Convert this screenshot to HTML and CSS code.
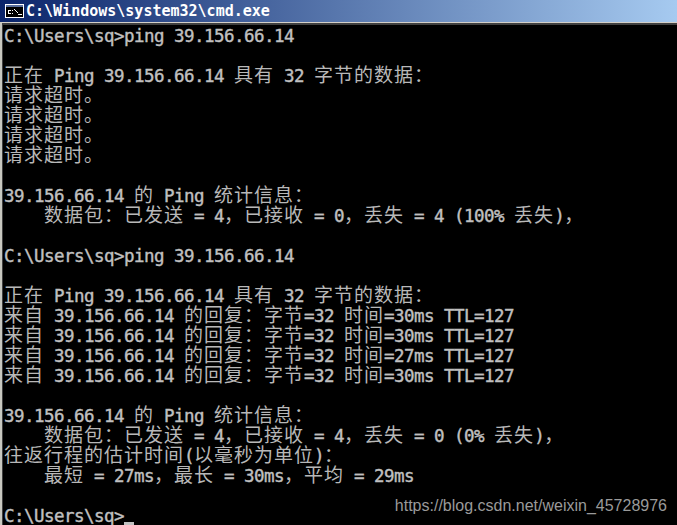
FILE: index.html
```html
<!DOCTYPE html>
<html lang="zh">
<head>
<meta charset="utf-8">
<title>cmd.exe</title>
<link rel="stylesheet" href="styles.css">
</head>
<body>
<div class="window">
  <div class="titlebar">
    <svg class="appicon" width="19" height="14" viewBox="0 0 19 14" aria-hidden="true"><rect x="0" y="0" width="19" height="14" fill="#fff"/><rect x="1" y="1" width="17" height="2" fill="#5a6f9e"/><rect x="1" y="3" width="17" height="10" fill="#000"/><path d="M3 6h3v1H3zM3 7h1v2H3zM3 9h3v1H3zM7 6h1v1H7zM7 9h1v1H7zM9 5h1v1H9zM10 6h1v1h-1zM11 7h1v1h-1zM12 8h1v1h-1zM13 10h4v1h-4z" fill="#fff"/></svg>
    <span class="title">C:\Windows\system32\cmd.exe</span>
  </div>
  <div class="console">
    <div class="line">C:\Users\sq&gt;ping 39.156.66.14</div>
    <div class="line"></div>
    <div class="line"><span class="z">正在</span> Ping 39.156.66.14 <span class="z">具有</span> 32 <span class="z">字节的数据：</span></div>
    <div class="line"><span class="z">请求超时。</span></div>
    <div class="line"><span class="z">请求超时。</span></div>
    <div class="line"><span class="z">请求超时。</span></div>
    <div class="line"><span class="z">请求超时。</span></div>
    <div class="line"></div>
    <div class="line">39.156.66.14 <span class="z">的</span> Ping <span class="z">统计信息：</span></div>
    <div class="line">    <span class="z">数据包：已发送</span> = 4<span class="z">，已接收</span> = 0<span class="z">，丢失</span> = 4 (100% <span class="z">丢失</span>)<span class="z">，</span></div>
    <div class="line"></div>
    <div class="line">C:\Users\sq&gt;ping 39.156.66.14</div>
    <div class="line"></div>
    <div class="line"><span class="z">正在</span> Ping 39.156.66.14 <span class="z">具有</span> 32 <span class="z">字节的数据：</span></div>
    <div class="line"><span class="z">来自</span> 39.156.66.14 <span class="z">的回复：字节</span>=32 <span class="z">时间</span>=30ms TTL=127</div>
    <div class="line"><span class="z">来自</span> 39.156.66.14 <span class="z">的回复：字节</span>=32 <span class="z">时间</span>=30ms TTL=127</div>
    <div class="line"><span class="z">来自</span> 39.156.66.14 <span class="z">的回复：字节</span>=32 <span class="z">时间</span>=27ms TTL=127</div>
    <div class="line"><span class="z">来自</span> 39.156.66.14 <span class="z">的回复：字节</span>=32 <span class="z">时间</span>=30ms TTL=127</div>
    <div class="line"></div>
    <div class="line">39.156.66.14 <span class="z">的</span> Ping <span class="z">统计信息：</span></div>
    <div class="line">    <span class="z">数据包：已发送</span> = 4<span class="z">，已接收</span> = 4<span class="z">，丢失</span> = 0 (0% <span class="z">丢失</span>)<span class="z">，</span></div>
    <div class="line"><span class="z">往返行程的估计时间</span>(<span class="z">以毫秒为单位</span>)<span class="z">：</span></div>
    <div class="line">    <span class="z">最短</span> = 27ms<span class="z">，最长</span> = 30ms<span class="z">，平均</span> = 29ms</div>
    <div class="line"></div>
    <div class="line">C:\Users\sq&gt;<span class="cursor"></span></div>
  </div>
  <div class="watermark">https://blog.csdn.net/weixin_45728976</div>
</div>
</body>
</html>
```
FILE: styles.css
```css
html, body {
  margin: 0;
  padding: 0;
  background: #000;
}
.window {
  position: relative;
  width: 677px;
  height: 525px;
  overflow: hidden;
  background: #000;
}
.titlebar {
  display: flex;
  align-items: center;
  gap: 2px;
  height: 22px;
  padding-left: 5px;
  box-sizing: border-box;
  background: linear-gradient(90deg, #0a246a 0%, #a6caf0 100%);
}
.appicon {
  flex: none;
}
.title {
  font-family: "DejaVu Sans Mono", monospace;
  font-weight: 700;
  font-size: 15px;
  color: #fff;
  white-space: pre;
}
.console {
  height: 503px;
  box-sizing: border-box;
  padding: 3px 0 0 2px;
  border-top: 1px solid #d4d0c8;
  border-left: 2px solid #c8c8c0;
  box-shadow: inset 1px 2px 0 #404040;
  font-family: "DejaVu Sans Mono", monospace;
  font-size: 17.5px;
  letter-spacing: -0.535px;
  font-weight: 400;
  -webkit-text-stroke: 0.4px #c0c0c0;
  color: #c0c0c0;
}
.line {
  height: 20px;
  line-height: 20px;
  white-space: pre;
}
.z {
  font-family: "Noto Sans CJK SC", sans-serif;
  font-weight: 400;
  font-size: 19px;
  letter-spacing: 1px;
  line-height: 0;
  -webkit-text-stroke: 0;
  color: #b8b8b8;
}
.cursor {
  display: inline-block;
  width: 10px;
  height: 5px;
  vertical-align: -5px;
  background: #c0c0c0;
}
.watermark {
  position: absolute;
  right: 10px;
  top: 497px;
  font-family: "Liberation Sans", Arial, sans-serif;
  font-size: 16px;
  line-height: 18px;
  color: #9a9a9a;
  white-space: pre;
}
```
